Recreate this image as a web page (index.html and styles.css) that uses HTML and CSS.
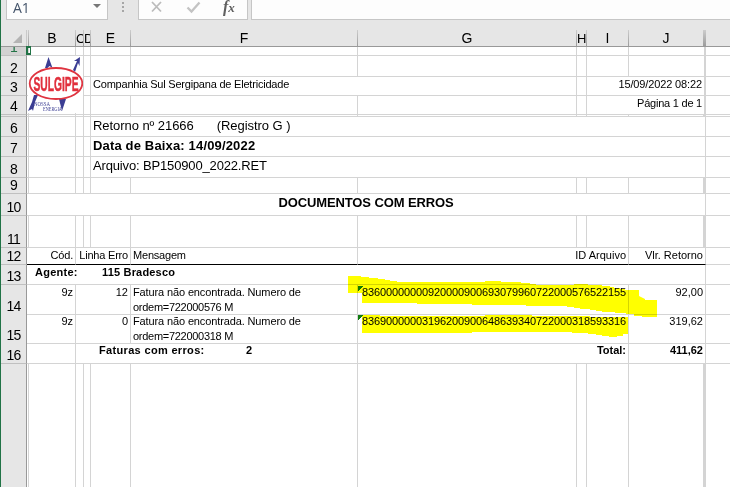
FILE: index.html
```
<!DOCTYPE html>
<html lang="pt-BR">
<head>
<meta charset="utf-8">
<title>Documentos com erros</title>
<link rel="stylesheet" href="styles.css">
</head>
<body>
<div class="window">
  <div class="formula-bar">
    <div class="name-box"><span>A1</span><i class="caret"></i></div>
    <div class="dots"><i></i><i></i><i></i></div>
    <div class="actions">
      <svg width="82" height="19" viewBox="0 0 82 19">
        <path d="M13 2l9 9.500M22 2l-9 9.500" stroke="#bcbcbc" stroke-width="1.800" fill="none"/>
        <path d="M48.500 7.500l4 4 8-9" stroke="#c3c3c3" stroke-width="2.300" fill="none"/>
      </svg>
      <span class="fx">f<small>x</small></span>
    </div>
    <div class="formula"></div>
  </div>
  <div class="columns">
    <div class="corner"><svg width="10" height="10"><path d="M9 0v9H0z" fill="#b4b4b4"/></svg></div>
    <div class="col"></div><div class="col">B</div><div class="col clip">C</div><div class="col clip">D</div><div class="col">E</div><div class="col">F</div><div class="col">G</div><div class="col clip">H</div><div class="col">I</div><div class="col thick">J</div><div class="col last"></div>
  </div>
  <div class="sheet">
    <div class="row r1"><b class="num active">1</b><p></p><p></p><p></p><p></p><p></p><p></p><p></p><p></p><p></p><p class="w2"></p><p></p></div>
    <div class="row r2"><b class="num">2</b><p></p><p></p><p></p><p></p><p></p><p></p><p></p><p></p><p></p><p class="w2"></p><p></p></div>
    <div class="row r3"><b class="num">3</b><p></p><p></p><p></p><p></p><p class="s3"><span class="t company">Companhia Sul Sergipana de Eletricidade</span></p><p></p><p class="s2 w2 right"><span class="t date">15/09/2022 08:22</span></p><p></p></div>
    <div class="row r4"><b class="num">4</b><p></p><p></p><p></p><p></p><p></p><p></p><p></p><p></p><p class="s2 w2 right"><span class="t page">Página 1 de 1</span></p><p></p></div>
    <div class="row r5"><b class="num"></b><p></p><p></p><p></p><p></p><p></p><p></p><p></p><p></p><p></p><p class="w3"></p><p></p></div>
    <div class="row r6"><b class="num">6</b><p></p><p></p><p></p><p></p><p class="s6 big"><span class="t retorno">Retorno nº 21666</span><span class="t registro">(Registro G )</span></p><p></p></div>
    <div class="row r7"><b class="num">7</b><p></p><p></p><p></p><p></p><p class="s6 big bold"><span class="t baixa">Data de Baixa: 14/09/2022</span></p><p></p></div>
    <div class="row r8"><b class="num">8</b><p></p><p></p><p></p><p></p><p class="s6 big"><span class="t arquivo">Arquivo: BP150900_2022.RET</span></p><p></p></div>
    <div class="row r9"><b class="num">9</b><p></p><p></p><p></p><p></p><p></p><p></p><p></p><p></p><p></p><p class="w3"></p><p></p></div>
    <div class="row r10"><b class="num">10</b><p class="s10 big bold center"><span class="t title">DOCUMENTOS COM ERROS</span></p><p></p></div>
    <div class="row r11"><b class="num">11</b><p></p><p></p><p></p><p></p><p></p><p></p><p></p><p></p><p></p><p class="w3"></p><p></p></div>
    <div class="row r12"><b class="num">12</b><p class="s2 right black"><span class="t linha">Cód.</span></p><p class="s3 right black"><span class="t linha">Linha Erro</span></p><p class="black"><span class="t linha">Mensagem</span></p><p class="s3 right black"><span class="t id-head">ID Arquivo</span></p><p class="right black"><span class="t valor">Vlr. Retorno</span></p><p></p></div>
    <div class="row r13"><b class="num">13</b><p class="s10 bold agent"><span class="t agente">Agente:</span><span class="t bradesco">115 Bradesco</span></p><p></p></div>
    <div class="row r14"><b class="num">14</b><p class="s2 right"><span class="t">9z</span></p><p class="s3 right"><span class="t">12</span></p><p class="wrap"><span class="t m1">Fatura não encontrada. Numero de</span><span class="t m2">ordem=722000576 M</span></p><p class="s3 right flag"><span class="t id">83600000000920000900693079960722000576522155</span></p><p class="right"><span class="t">92,00</span></p><p></p></div>
    <div class="row r15"><b class="num">15</b><p class="s2 right"><span class="t">9z</span></p><p class="s3 right"><span class="t">0</span></p><p class="wrap"><span class="t m1">Fatura não encontrada. Numero de</span><span class="t m2">ordem=722000318 M</span></p><p class="s3 right flag"><span class="t id">83690000003196200900648639340722000318593316</span></p><p class="right"><span class="t">319,62</span></p><p></p></div>
    <div class="row r16"><b class="num">16</b><p class="s2"></p><p class="s4 bold totals"><span class="t faturas">Faturas com erros:</span><span class="t">2</span></p><p class="s3 bold right"><span class="t total">Total:</span></p><p class="bold right"><span class="t sum">411,62</span></p><p></p></div>
    <div class="row rest"><b class="num"></b><p></p><p></p><p></p><p></p><p></p><p></p><p></p><p></p><p></p><p class="w3"></p><p></p></div>
  </div>
  <svg class="logo" viewBox="0 0 55 57">
    <rect width="55" height="57" fill="#fff"/>
    <g fill="#3b3d93"><path d="M17 12L20.500 1l4 11-3-2-2 2z"/><path d="M45 14l4-9-3 0 6-4-0.500 9-1.500-3-3 9z"/><path d="M6 39L4 46l-4 9 4-2 1 2 2-9 3-7z"/><path d="M31 43h7l-4 12zM33 44l5-1-4 11z"/></g>
    <ellipse cx="28" cy="27.500" rx="26.300" ry="15.500" fill="#fff" stroke="#df3440" stroke-width="1.800"/>
    <text x="5.500" y="34.500" textLength="45" lengthAdjust="spacingAndGlyphs" class="logo-name">SULGIPE</text>
    <text x="6" y="50" textLength="16" lengthAdjust="spacingAndGlyphs" class="logo-tag">NOSSA</text>
    <text x="15" y="55" textLength="19" lengthAdjust="spacingAndGlyphs" class="logo-tag">ENERGIA</text>
  </svg>
  <i class="selection"></i>
  <svg class="marker" viewBox="340 270 330 75">
    <path d="M348 276H361V277H369V278H378V279H385V280H390V281H397V282H455V282H485V281H501V282H521V283H530V284H536V285H574V284H588V285H602V286H610V287H614V288H620V289H625V290H639V296L645 299V300H657V317H642V316H634V314H626V313H615V312H602V311H596V310H590V309H580V308H574V307H567V306H526V305H472V304H417V303H362V293H348Z"/>
    <path d="M362 315H380V316H485V315H532V316H590V317H628V334H623V336H617V337H609V336H602V335H596V334H588V333H572V332H472V333H362Z"/>
  </svg>
</div>
</body>
</html>
```
FILE: styles.css
```
* { box-sizing: border-box; }
body { margin: 0; font-family: "Liberation Sans", Arial, sans-serif; color: #000; background: #fff; }
.window { position: relative; width: 730px; height: 487px; overflow: hidden; border-left: 1px solid #217346; display: flex; flex-direction: column; }

.formula-bar { flex: none; height: 30px; background: #e6e6e6; display: flex; align-items: flex-start; padding-left: 5px; }
.formula-bar > div { height: 20px; }
.name-box, .actions, .formula { background: #fdfdfd; border: 1px solid #c6c6c6; border-top: 0; }
.name-box { width: 102px; display: flex; justify-content: space-between; padding: 0 6px 0 6px; font: 14px/15px "Open Sans", sans-serif; color: #44546a; }
.caret { width: 0; height: 0; margin-top: 4px; border: 4px solid transparent; border-top-color: #777; border-bottom: 0; }
.dots { width: 30px; display: flex; flex-direction: column; align-items: center; gap: 2px; padding-top: 2px; }
.dots i { width: 2px; height: 2px; background: #a6a6a6; }
.actions { width: 110px; display: flex; }
.actions svg { flex: none; }
.fx { padding-left: 2px; font: italic bold 16px/13px "Liberation Serif", serif; color: #606060; white-space: nowrap; }
.fx small { font-size: 13px; }
.formula { margin-left: 3px; flex: 1; border-right: 0; }

.columns, .row { display: grid; grid-template-columns: 26px 2px 47px 8px 7px 40px 227px 219px 10px 42px 77px 24px; }
.columns { flex: none; height: 17px; background: #e6e6e6; border-bottom: 1px solid #999; }
.col { font-size: 14px; line-height: 17px; text-align: center; border-right: 1px solid; border-image: linear-gradient(#d0d0d0, #999) 1; overflow: hidden; min-width: 0; }
.clip { display: flex; justify-content: flex-start; font-size: 13px; letter-spacing: -1px; }
.col.thick { border-right-width: 3px; }
.col.last { border: 0; }
.corner { display: flex; justify-content: flex-end; padding: 4px 3px 0 0; border-right: 1px solid #c9c9c9; }

.sheet { flex: 1; display: flex; flex-direction: column; }
.row { flex: none; }
.num { display: flex; justify-content: center; align-items: flex-end; font-weight: normal; font-size: 14px; line-height: 15px; letter-spacing: -0.7px; background: #e6e6e6; border-right: 1px solid #999; border-bottom: 1px solid #c0c0c0; overflow: hidden; min-height: 0; }
.active { background: #d2d2d2; color: #217346; }
.row p { margin: 0; min-width: 0; border: solid #d4d4d4; border-width: 0 1px 1px 0; white-space: nowrap; font-size: 11px; line-height: 13px; padding: 1px 2px 0; }
.row p:empty { padding: 0; }
.row p:last-child { border-right: 0; }
.row .w2 { border-right-width: 2px; }
.row .w3 { border-right-width: 3px; }
.row .black { border-bottom-color: #000; }
.row .big { font-size: 13px; line-height: 15px; }
.row .bold { font-weight: bold; }
.right { display: flex; justify-content: flex-end; }
.center { text-align: center; }
.s2 { grid-column: span 2; } .s3 { grid-column: span 3; } .s4 { grid-column: span 4; }
.s6 { grid-column: span 6; } .s10 { grid-column: span 10; }
.r1 { height: 9px; } .r2 { height: 21px; } .r3, .r4 { height: 19px; } .r5 { height: 2px; }
.r6, .r7 { height: 20px; } .r8 { height: 21px; } .r9 { height: 16px; } .r10 { height: 22px; }
.r11 { height: 32px; } .r12 { height: 17px; } .r13 { height: 20px; } .r14, .r15 { height: 29px; } .r16 { height: 21px; }
.row.rest { flex: 1; }
.row.rest > * { border-bottom: 0; }
.t { display: inline-block; }
.company { letter-spacing: -0.21px; }
.date { letter-spacing: -0.13px; }
.page { letter-spacing: -0.23px; }
.retorno { letter-spacing: -0.06px; }
.registro { margin-left: 23px; letter-spacing: -0.04px; }
.baixa { letter-spacing: 0.16px; }
.arquivo { letter-spacing: -0.15px; }
.title { letter-spacing: -0.11px; }
.linha { letter-spacing: -0.2px; }
.m1 { letter-spacing: -0.125px; }
.m2 { letter-spacing: -0.28px; }
.id { letter-spacing: -0.118px; }
.wrap .t { display: block; line-height: 17px; height: 15px; }
.wrap .m1 { line-height: 13px; height: 13px; }
.agent .agente { margin-left: 6px; width: 67px; letter-spacing: 0.25px; }
.bradesco { letter-spacing: 0.18px; }
.totals .faturas { margin-left: 21px; width: 147px; letter-spacing: 0.33px; }
.flag { background: linear-gradient(135deg, #107c10 0 4px, transparent 4px) no-repeat 0 1px / 6px 6px; }

.logo { position: absolute; left: 27px; top: 56px; width: 55px; height: 57px; }
.logo-name { font: bold 20px "Liberation Sans", sans-serif; fill: #e12f3c; stroke: #e12f3c; stroke-width: 0.5px; }
.logo-tag { font: 7px "Liberation Serif", serif; fill: #3b3d93; }
.selection { position: absolute; left: 25px; top: 46px; width: 5px; height: 9px; border: 2px solid #217346; border-right-width: 1px; }
.marker { position: absolute; left: 339px; top: 270px; width: 330px; height: 75px; mix-blend-mode: multiply; fill: #ff0; }
```
